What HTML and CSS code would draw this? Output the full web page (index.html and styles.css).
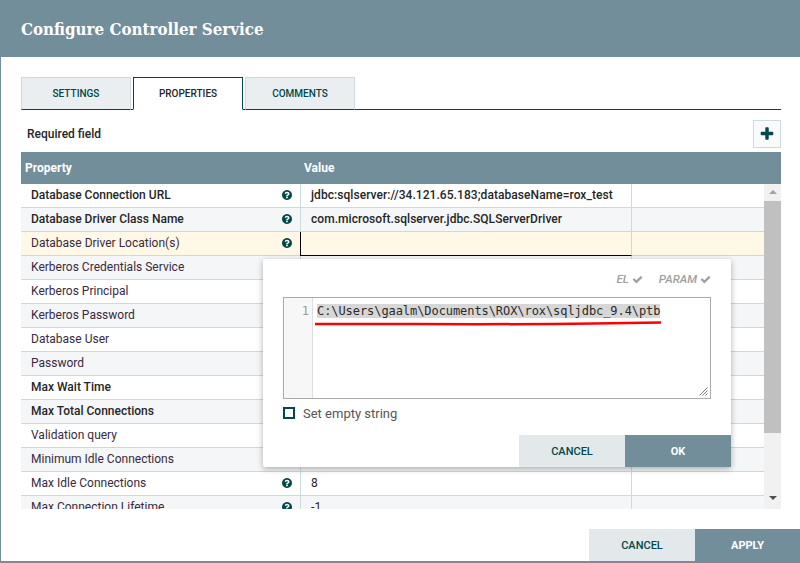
FILE: index.html
```html
<!DOCTYPE html>
<html lang="en">
<head>
    <meta charset="UTF-8">
    <meta name="viewport" content="width=device-width, initial-scale=1.0">
    <title>Configure Controller Service</title>
    <link rel="stylesheet" href="styles.css">
</head>
<body>
    <svg class="icon-defs" width="0" height="0">
        <symbol id="i-help" viewBox="128 128 1536 1536"><path d="M1024 1376v-192q0-14-9-23t-23-9h-192q-14 0-23 9t-9 23v192q0 14 9 23t23 9h192q14 0 23-9t9-23zm256-672q0-88-55.500-163t-138.500-116-170-41q-243 0-371 213-15 24 8 42l132 100q7 6 19 6 16 0 25-12 53-68 86-92 34-24 86-24 48 0 85.500 26t37.500 59q0 38-20 61t-68 45q-63 28-115.500 86.500t-52.500 125.500v36q0 14 9 23t23 9h192q14 0 23-9t9-23q0-19 21.500-49.500t54.500-49.500q32-18 49-28.500t46-35 44.500-48 28-60.500 12.500-81zm384 192q0 209-103 385.500t-279.500 279.500-385.500 103-385.500-103-279.500-279.500-103-385.500 103-385.500 279.500-279.500 385.500-103 385.500 103 279.500 279.500 103 385.500z"/></symbol>
        <symbol id="i-check" viewBox="0 0 1792 1792"><path d="M1671 566q0 40-28 68l-724 724-136 136q-28 28-68 28t-68-28l-136-136-362-362q-28-28-28-68t28-68l136-136q28-28 68-28t68 28l294 295 656-657q28-28 68-28t68 28l136 136q28 28 28 68z"/></symbol>
    </svg>

    <div class="dialog">
        <div class="dialog-header">Configure Controller Service</div>

        <div class="dialog-body">
            <div class="tabs">
                <div class="tab">Settings</div>
                <div class="tab active">Properties</div>
                <div class="tab">Comments</div>
            </div>

            <div class="toolbar">
                <span class="required">Required field</span>
                <button class="add-btn">
                    <svg viewBox="0 0 1792 1792"><path d="M1600 736v192q0 40-28 68t-68 28h-416v416q0 40-28 68t-68 28h-192q-40 0-68-28t-28-68v-416h-416q-40 0-68-28t-28-68v-192q0-40 28-68t68-28h416v-416q0-40 28-68t68-28h192q40 0 68 28t28 68v416h416q40 0 68 28t28 68z"/></svg>
                </button>
            </div>

            <div class="table-head">
                <div class="head-prop">Property</div>
                <div class="head-value">Value</div>
            </div>

            <div class="table-wrap">
                <div class="rows">
                    <div class="row">
                        <div class="cell-name strong">Database Connection URL<svg class="help"><use href="#i-help"/></svg></div>
                        <div class="cell-value strong">jdbc:sqlserver://34.121.65.183;databaseName=rox_test</div>
                        <div class="cell-end"></div>
                    </div>
                    <div class="row">
                        <div class="cell-name strong">Database Driver Class Name<svg class="help"><use href="#i-help"/></svg></div>
                        <div class="cell-value strong">com.microsoft.sqlserver.jdbc.SQLServerDriver</div>
                        <div class="cell-end"></div>
                    </div>
                    <div class="row editing">
                        <div class="cell-name">Database Driver Location(s)<svg class="help"><use href="#i-help"/></svg></div>
                        <div class="cell-value"></div>
                        <div class="cell-end"></div>
                    </div>
                    <div class="row">
                        <div class="cell-name">Kerberos Credentials Service</div>
                        <div class="cell-value"></div>
                        <div class="cell-end"></div>
                    </div>
                    <div class="row">
                        <div class="cell-name">Kerberos Principal</div>
                        <div class="cell-value"></div>
                        <div class="cell-end"></div>
                    </div>
                    <div class="row">
                        <div class="cell-name">Kerberos Password</div>
                        <div class="cell-value"></div>
                        <div class="cell-end"></div>
                    </div>
                    <div class="row">
                        <div class="cell-name">Database User</div>
                        <div class="cell-value"></div>
                        <div class="cell-end"></div>
                    </div>
                    <div class="row">
                        <div class="cell-name">Password</div>
                        <div class="cell-value"></div>
                        <div class="cell-end"></div>
                    </div>
                    <div class="row">
                        <div class="cell-name strong">Max Wait Time</div>
                        <div class="cell-value"></div>
                        <div class="cell-end"></div>
                    </div>
                    <div class="row">
                        <div class="cell-name strong">Max Total Connections</div>
                        <div class="cell-value"></div>
                        <div class="cell-end"></div>
                    </div>
                    <div class="row">
                        <div class="cell-name">Validation query</div>
                        <div class="cell-value"></div>
                        <div class="cell-end"></div>
                    </div>
                    <div class="row">
                        <div class="cell-name">Minimum Idle Connections</div>
                        <div class="cell-value"></div>
                        <div class="cell-end"></div>
                    </div>
                    <div class="row">
                        <div class="cell-name">Max Idle Connections<svg class="help"><use href="#i-help"/></svg></div>
                        <div class="cell-value">8</div>
                        <div class="cell-end"></div>
                    </div>
                    <div class="row">
                        <div class="cell-name">Max Connection Lifetime<svg class="help"><use href="#i-help"/></svg></div>
                        <div class="cell-value">-1</div>
                        <div class="cell-end"></div>
                    </div>
                </div>
                <div class="scrollbar">
                    <div class="arrow-up"></div>
                    <div class="thumb"></div>
                    <div class="arrow-down"></div>
                </div>
            </div>
        </div>

        <div class="dialog-footer">
            <button class="btn btn-light">Cancel</button>
            <button class="btn btn-dark btn-last">Apply</button>
        </div>

        <!-- property editor popup, sits over the table -->
        <div class="popup">
            <div class="flags">
                <span class="flag">EL<svg class="check"><use href="#i-check"/></svg></span>
                <span class="flag">PARAM<svg class="check"><use href="#i-check"/></svg></span>
            </div>
            <div class="editor">
                <div class="gutter">1</div>
                <div class="code"><span class="selected">C:\Users\gaalm\Documents\ROX\rox\sqljdbc_9.4\ptb</span></div>
                <svg class="scribble" width="352" height="6" viewBox="0 0 352 6"><path d="M1 4 L100 4 Q200 4.500 280 3.500 L347 2.500"/></svg>
                <svg class="resize" width="9" height="9" viewBox="0 0 9 9"><path d="M0.500 8.500 L8.500 0.500 M3.500 8.500 L8.500 3.500 M6.500 8.500 L8.500 6.500"/></svg>
            </div>
            <label class="empty-string"><span class="checkbox"></span>Set empty string</label>
            <div class="popup-footer">
                <button class="btn btn-light">Cancel</button>
                <button class="btn btn-dark">OK</button>
            </div>
        </div>
    </div>
</body>
</html>
```

FILE: styles.css
```css
* {
    box-sizing: border-box;
}
html, body {
    margin: 0;
    height: 563px;
    overflow: hidden;
}
body {
    background-color: #728e9b;
    font-family: Roboto, Arial, sans-serif;
    font-size: 12px;
    color: #262626;
}
.icon-defs {
    position: absolute;
}

.dialog {
    position: relative;
    margin-left: 1px;
    height: 561px;
    background-color: #fff;
    display: flex;
    flex-direction: column;
}
.dialog-header {
    height: 57px;
    padding-left: 20px;
    display: flex;
    align-items: center;
    background-color: #728e9b;
    color: #fff;
    font-family: "DejaVu Serif Condensed", "DejaVu Serif", serif;
    font-weight: bold;
    font-stretch: condensed;
    font-size: 16.8px;
}
.dialog-body {
    flex: 1;
    padding: 20px 19px 0 20px;
}

.tabs {
    display: flex;
    gap: 2px;
    height: 33px;
    border-bottom: 1px solid #004849;
}
.tab {
    width: 110px;
    height: 33px;
    display: flex;
    align-items: center;
    justify-content: center;
    background-color: #eaeef0;
    border: 1px solid #cfdadf;
    border-bottom: 1px solid #004849;
    color: #004849;
    font-size: 10px;
    font-weight: 500;
    text-transform: uppercase;
}
.tab.active {
    background-color: #fff;
    border-color: #004849;
    border-bottom-color: #fff;
    color: #262626;
}

.toolbar {
    height: 42px;
    padding: 10px 0 0 6px;
    display: flex;
    justify-content: space-between;
}
.required {
    margin-top: 7px;
    font-weight: 500;
}
.add-btn {
    width: 28px;
    height: 28px;
    padding: 0;
    display: flex;
    align-items: center;
    justify-content: center;
    background-color: #f8fafb;
    border: 1px solid #cfdadf;
}
.add-btn svg {
    width: 16px;
    height: 16px;
    fill: #004849;
}

.table-head {
    height: 32px;
    display: flex;
    align-items: center;
    background-color: #728e9b;
    color: #fff;
    font-weight: 700;
}
.head-prop {
    width: 283px;
    padding-left: 4px;
}

.table-wrap {
    height: 325px;
    display: flex;
    overflow: hidden;
}
.rows {
    width: 743px;
}
.row {
    height: 24px;
    display: flex;
    border-bottom: 1px solid #ccdadb;
}
.row:nth-child(even) {
    background-color: #f4f6f7;
}
.row.editing {
    background-color: #fff8e7;
}
.cell-name {
    width: 279px;
    padding: 0 8px 2px 10px;
    display: flex;
    align-items: center;
    justify-content: space-between;
    color: #3a2a3c;
}
.cell-value {
    width: 332px;
    padding: 0 0 2px 10px;
    display: flex;
    align-items: center;
    border-left: 1px solid #ccdadb;
    border-right: 1px solid #ccdadb;
    letter-spacing: 0.06px;
}
.strong {
    font-weight: 500;
    color: #262626;
}
.row.editing .cell-value {
    height: 24px;
    border-left-color: #000;
    border-bottom: 1px solid #000;
}
.help {
    width: 10px;
    height: 10px;
    flex-shrink: 0;
    fill: #004849;
}

.scrollbar {
    position: relative;
    width: 17px;
    background-color: #f1f1f1;
}
.thumb {
    margin-top: 17px;
    height: 232px;
    background-color: #c0c0c0;
}
.arrow-up, .arrow-down {
    position: absolute;
    left: 5px;
    border-left: 4px solid transparent;
    border-right: 4px solid transparent;
}
.arrow-up {
    top: 6px;
    border-bottom: 4px solid #a3a3a3;
}
.arrow-down {
    top: 312px;
    border-top: 4px solid #505050;
}

.dialog-footer, .popup-footer {
    display: flex;
    justify-content: flex-end;
}
.btn {
    width: 106px;
    height: 32px;
    padding: 0;
    border: none;
    font-family: Roboto, Arial, sans-serif;
    font-size: 11px;
    font-weight: 500;
    text-transform: uppercase;
}
.btn-light {
    background-color: #e3e8eb;
    color: #004849;
}
.btn-dark {
    background-color: #728e9b;
    color: #fff;
    font-weight: 700;
}
.btn-last {
    width: 105px;
}

.popup {
    position: absolute;
    left: 262px;
    top: 259px;
    width: 468px;
    height: 208px;
    padding-left: 20px;
    display: flex;
    flex-direction: column;
    background-color: #fff;
    border-radius: 2px;
    box-shadow: 0 2px 6px rgba(0, 0, 0, 0.3);
}
.flags {
    height: 38px;
    padding: 13px 20px 0 0;
    display: flex;
    justify-content: flex-end;
    gap: 16px;
}
.flag {
    display: flex;
    align-items: center;
    gap: 3px;
    height: 14px;
    font-size: 11.6px;
    font-weight: 500;
    font-style: italic;
    color: #a0a0a0;
}
.check {
    width: 11px;
    height: 11px;
    fill: #a0a0a0;
}
.editor {
    position: relative;
    width: 428px;
    height: 102px;
    display: flex;
    border: 1px solid #aaa;
}
.gutter {
    width: 29px;
    padding: 5px 3px 0 0;
    text-align: right;
    background-color: #f7f7f7;
    border-right: 1px solid #ddd;
    color: #999;
    font-family: "DejaVu Sans Mono", monospace;
    font-size: 12px;
    line-height: 16px;
}
.code {
    padding: 5px 0 0 4px;
    font-family: "DejaVu Sans Mono", monospace;
    font-size: 12px;
    line-height: 16px;
    letter-spacing: -0.07px;
    white-space: pre;
    color: #2a2a2a;
}
.selected {
    background-color: #d7d7d7;
}
.scribble {
    position: absolute;
    left: 30px;
    top: 22px;
}
.scribble path {
    fill: none;
    stroke: #f00;
    stroke-width: 2.5;
}
.resize {
    position: absolute;
    right: 2px;
    bottom: 2px;
}
.resize path {
    fill: none;
    stroke: #777;
    stroke-width: 1;
}
.empty-string {
    margin-top: 7px;
    display: flex;
    align-items: center;
    gap: 8px;
    height: 14px;
    font-size: 13px;
    color: #555;
}
.checkbox {
    width: 12px;
    height: 12px;
    border: 2px solid #004849;
}
.popup-footer {
    margin-top: auto;
}
```
